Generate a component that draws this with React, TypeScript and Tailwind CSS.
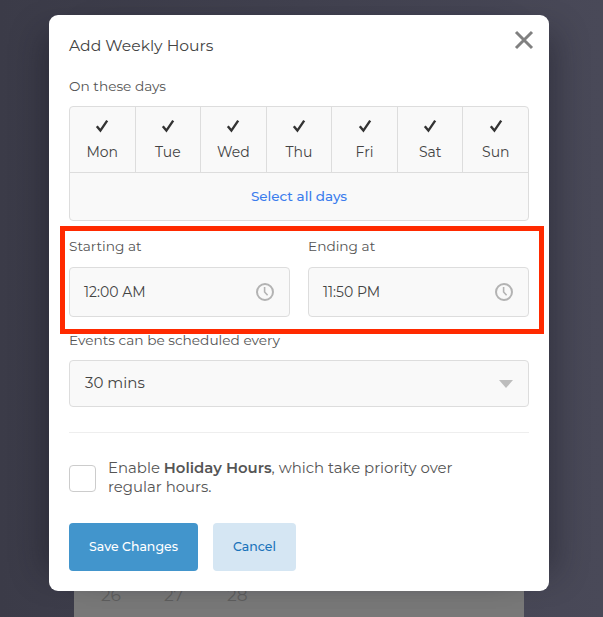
import React from 'react';

const days = ['Mon', 'Tue', 'Wed', 'Thu', 'Fri', 'Sat', 'Sun'];

function Check() {
  return (
    <svg width="14" height="14" viewBox="0 0 14 14" className="text-[#333333]">
      <path d="M1.8 7.2 L5.4 11.6 L12.2 1.6" fill="none" stroke="currentColor" strokeWidth="2.4" />
    </svg>
  );
}

function ClockIcon() {
  return (
    <svg width="20" height="20" viewBox="0 0 20 20" className="text-[#b3b3b3]">
      <circle cx="10" cy="10" r="8" fill="none" stroke="currentColor" strokeWidth="2" />
      <path d="M9.6 5 V10 L12.6 13.2" fill="none" stroke="currentColor" strokeWidth="1.6" />
    </svg>
  );
}

function TimeField({ label, value }: { label: string; value: string }) {
  return (
    <div className="flex-1">
      <div className="h-[21px] text-[13.7px] leading-[21px] text-[#555555] mt-[15px]">{label}</div>
      <div className="mt-[10px] h-[50px] flex items-center justify-between pl-[14px] pr-[14px] bg-[#f9f9f9] border border-[#dddddd] rounded-[4px]">
        <span className="text-[14px] text-[#444444]">{value}</span>
        <ClockIcon />
      </div>
    </div>
  );
}

export default function App() {
  return (
    <div className="relative h-[617px] overflow-hidden bg-gradient-to-r from-[#3b3b48] to-[#494958] pt-[15px] font-['Montserrat','Noto_Sans',sans-serif]">
      {/* page behind the modal, only its lower edge shows */}
      <div className="absolute left-[74px] top-[560px] w-[450px] h-[57px] bg-[#787878] text-[#5f5f5f] text-[17px]">
        <span className="absolute left-[27px] top-[23px]">26</span>
        <span className="absolute left-[90px] top-[23px]">27</span>
        <span className="absolute left-[153px] top-[23px]">28</span>
      </div>

      <div className="relative ml-[49px] w-[500px] h-[576px] bg-white rounded-[9px] px-[20px] pt-[20px] shadow-[-24px_0_30px_-18px_rgba(20,20,30,0.4),24px_0_30px_-18px_rgba(20,20,30,0.4)]">
        <h2 className="text-[15.6px] leading-[22px] text-[#444444] font-normal">Add Weekly Hours</h2>
        <button className="absolute right-[14px] top-[14px] text-[#808080]">
          <svg width="22" height="22" viewBox="0 0 22 22">
            <path d="M3 3 L19 19 M19 3 L3 19" fill="none" stroke="currentColor" strokeWidth="3" />
          </svg>
        </button>

        <div className="mt-[19px] h-[21px] text-[13.7px] leading-[21px] text-[#555555]">On these days</div>

        <div className="mt-[9px] h-[115px] bg-[#f9f9f9] border border-[#dddddd] rounded-[4px] flex flex-col">
          <div className="flex h-[66px] border-b border-[#dddddd]">
            {days.map((d, i) => (
              <div
                key={d}
                className={`flex-1 flex flex-col items-center pt-[12px] ${i < 6 ? 'border-r border-[#dddddd]' : ''}`}
              >
                <Check />
                <span className="mt-[10px] text-[14px] leading-[18px] text-[#444444]">{d}</span>
              </div>
            ))}
          </div>
          <div className="flex-1 flex items-center justify-center text-[13.5px] font-medium text-[#3b7ded]">Select all days</div>
        </div>

        <div className="flex gap-[18px]">
          <TimeField label="Starting at" value="12:00 AM" />
          <TimeField label="Ending at" value="11:50 PM" />
        </div>

        <div className="mt-[13px] h-[21px] text-[13.7px] leading-[21px] text-[#555555]">Events can be scheduled every</div>
        <div className="mt-[9px] h-[47px] flex items-center justify-between pl-[15px] pr-[15px] bg-[#f9f9f9] border border-[#dddddd] rounded-[4px]">
          <span className="text-[15px] text-[#444444]">30 mins</span>
          <svg width="14" height="8" viewBox="0 0 14 8" className="text-[#bdbdbd]">
            <path d="M0 0 H14 L7 8 Z" fill="currentColor" />
          </svg>
        </div>

        <div className="mt-[25px] border-t border-[#eeeeee]" />

        <div className="mt-[26px] flex items-center gap-[12px]">
          <div className="w-[27px] h-[27px] shrink-0 bg-white border border-[#cccccc] rounded-[4px]" />
          <p className="text-[14.9px] leading-[19px] text-[#555555]">
            Enable <strong className="font-semibold">Holiday Hours</strong>, which take priority over
            <br />
            regular hours.
          </p>
        </div>

        <div className="mt-[26px] flex gap-[15px]">
          <button className="w-[129px] h-[48px] bg-[#4295cc] text-white text-[12.5px] font-medium rounded-[4px]">Save Changes</button>
          <button className="w-[83px] h-[48px] bg-[#d5e6f3] text-[#1a73ba] text-[12.5px] font-medium rounded-[4px]">Cancel</button>
        </div>
      </div>

      {/* red annotation box */}
      <div className="absolute left-[60px] top-[226px] w-[484px] h-[108px] border-[5px] border-[#ff2a00]" />
    </div>
  );
}
